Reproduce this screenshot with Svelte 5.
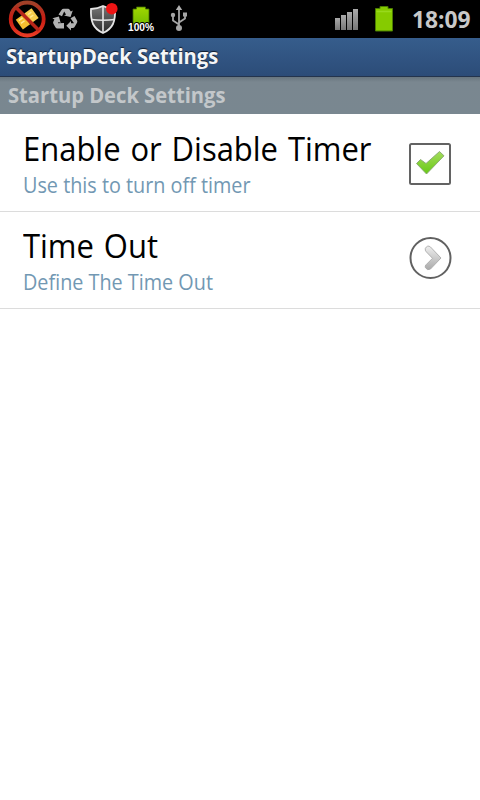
<script lang="ts">
	type Pref = { title: string; summary: string; kind: 'checkbox' | 'dialog' };

	const prefs: Pref[] = [
		{ title: 'Enable or Disable Timer', summary: 'Use this to turn off timer', kind: 'checkbox' },
		{ title: 'Time Out', summary: 'Define The Time Out', kind: 'dialog' }
	];

	let enabled = $state(true);
</script>

<div class="screen">
	<div class="status">
		<svg class="icons" width="200" height="38" viewBox="0 0 200 38">
			<defs>
				<linearGradient id="ban" x1="0" y1="0" x2="0" y2="1">
					<stop offset="0" stop-color="#a04028" />
					<stop offset="0.5" stop-color="#c91c12" />
					<stop offset="1" stop-color="#e83a24" />
				</linearGradient>
				<linearGradient id="shield" x1="0" y1="0" x2="0" y2="1">
					<stop offset="0" stop-color="#777" />
					<stop offset="1" stop-color="#292929" />
				</linearGradient>
				<linearGradient id="cell" x1="0" y1="0" x2="0" y2="1">
					<stop offset="0" stop-color="#a0d800" />
					<stop offset="1" stop-color="#71b900" />
				</linearGradient>
			</defs>

			<!-- blocked app -->
			<g transform="rotate(-36 27 19)">
				<rect x="17.500" y="13" width="9" height="12" fill="#f5bf30" />
				<rect x="28" y="13" width="9" height="12" fill="#f8cc4c" />
				<path d="M19.500 15.500h4.500M19.500 19h4.500M30.500 16h4M30.500 19.500h4" stroke="#ffe894" stroke-width="1.5" />
			</g>
			<circle cx="27.200" cy="19" r="16.500" fill="none" stroke="url(#ban)" stroke-width="3.800" />
			<path d="M16 7.500l23 23" stroke="#b9261a" stroke-width="3.600" />

			<!-- recycle -->
			<g fill="#b2b2b2">
				<path d="M58.500 14.500l3-4.600q.8-1.100 2.200-1.100h4.300q1.200 0 1.800 1.100l1 1.700 2-1.100-2.300 6.500-6.500-1.400 2-1.100-1.800-3-2.200 4.800z" />
				<path d="M70.500 18.200l4-2.200 2.500 4.400q.7 1.200 0 2.400l-2 3.500q-.7 1.700-2 1.700h-2v2.500l-4.700-4.800 4.700-4.800v2.400h3z" />
				<path d="M64 23v5.500h-6.500q-1.400 0-2.100-1.200l-2-3.600q-.6-1.200 0-2.300l1-1.900-2-1.200 6.500-1.700 1.800 6.400-2-1-.8 1.200z" />
			</g>

			<!-- shield -->
			<path d="M91 9q7-.4 12-3 5 2.600 12 3 .5 9-2 15-3 6-10 9-7-3-10-9-2.500-6-2-15z" fill="url(#shield)" stroke="#e4e4e4" stroke-width="1.800" />
			<path d="M103 7v25M91 19.500q12 1.500 24 0" fill="none" stroke="#e6e6e6" stroke-width="1.600" />
			<circle cx="111.800" cy="8.700" r="5.800" fill="#ee1414" />

			<!-- battery with level -->
			<path d="M136.500 7h9v2h3.500v18h-16V9h3.500z" fill="url(#cell)" stroke="#456f00" stroke-width="0.800" />
			<text x="128" y="31" class="level" textLength="26" lengthAdjust="spacingAndGlyphs">100%</text>

			<!-- usb -->
			<path d="M179 9v18M179 24.500l-6-4v-5M179 22.500l6-4v-4" fill="none" stroke="#a5a5a5" stroke-width="1.800" />
			<path d="M179 5l3.200 5h-6.400z" fill="#b0b0b0" />
			<circle cx="173" cy="15" r="2.200" fill="#a5a5a5" />
			<rect x="183" y="12.500" width="4" height="4" fill="#a5a5a5" />
			<circle cx="179" cy="28" r="3" fill="#a5a5a5" />
		</svg>

		<div class="right">
			<svg width="64" height="38" viewBox="332 0 64 38">
				<defs>
					<linearGradient id="bar" x1="0" y1="0" x2="0" y2="1">
						<stop offset="0" stop-color="#aaa" />
						<stop offset="1" stop-color="#777" />
					</linearGradient>
				</defs>
				<g fill="url(#bar)">
					<rect x="335" y="18" width="5" height="12" />
					<rect x="341" y="15" width="5" height="15" />
					<rect x="347" y="12" width="5" height="18" />
					<rect x="353" y="9" width="5" height="21" />
				</g>
				<path d="M380 6.500h8v2h4.500V31h-17V8.500h4.500z" fill="#86cb00" stroke="#4b7d00" />
				<path d="M376.500 11.500h15" stroke="#98d91c" stroke-width="1.500" />
			</svg>
			<span class="clock">18:09</span>
		</div>
	</div>

	<div class="titlebar"><span>StartupDeck Settings</span></div>
	<div class="category"><span>Startup Deck Settings</span></div>

	<div class="list">
		{#each prefs as pref}
			<div class="pref">
				<div class="labels">
					<div class="title"><span>{pref.title}</span></div>
					<div class="summary"><span>{pref.summary}</span></div>
				</div>
				{#if pref.kind === 'checkbox'}
					<button class="widget check" aria-label={pref.title} onclick={() => (enabled = !enabled)}>
						<svg width="44" height="44" viewBox="0 0 44 44">
							<defs>
								<linearGradient id="tick" x1="0" y1="0" x2="0" y2="1">
									<stop offset="0" stop-color="#a4dc5c" />
									<stop offset="1" stop-color="#68c916" />
								</linearGradient>
							</defs>
							<rect x="2" y="2" width="40" height="40" rx="1.500" fill="#fff" stroke="#636363" stroke-width="2" />
							{#if enabled}
								<path d="M8.500 21.500l4-4 5.500 4L31.500 9.500l4.500 4.300L18.500 32z" fill="url(#tick)" stroke="#86a670" stroke-width="0.900" stroke-linejoin="round" />
							{/if}
						</svg>
					</button>
				{:else}
					<button class="widget" aria-label={pref.title}>
						<svg width="44" height="44" viewBox="0 0 44 44">
							<defs>
								<linearGradient id="chev" x1="0" y1="0" x2="0" y2="1">
									<stop offset="0" stop-color="#eee" />
									<stop offset="1" stop-color="#aaa" />
								</linearGradient>
							</defs>
							<circle cx="22.500" cy="22" r="20" fill="#fff" stroke="#616161" stroke-width="2" />
							<path d="M17.300 12.500q2.200-4 5.200-1.500l10.500 11L22.500 33q-3 2-5.200-1.500-.6-1.500 1-3l6.200-6.200-6.200-6.500q-1.500-1.500-1-3.300z" fill="url(#chev)" stroke="#aaa" stroke-width="0.900" />
						</svg>
					</button>
				{/if}
			</div>
		{/each}
	</div>
</div>

<style>
	:global(body) { margin: 0; background: #fff; }

	.screen {
		width: 480px;
		height: 800px;
		overflow: hidden;
		background: #fff;
		font-family: "Open Sans", "Noto Sans", sans-serif;
	}

	span { display: inline-block; transform-origin: 0 50%; white-space: nowrap; }

	.status { display: flex; justify-content: space-between; height: 38px; background: #000; }
	.status svg { display: block; }
	.level { font: bold 10.5px "Liberation Sans", sans-serif; fill: #fff; stroke: #000; stroke-width: 2px; paint-order: stroke; }
	.right { display: flex; width: 148px; }
	.clock { margin-left: 16px; font-size: 23px; font-weight: 700; line-height: 39px; color: #c8c8c8; transform: scaleX(0.99); }

	.titlebar {
		box-sizing: border-box;
		height: 39px;
		padding-left: 6px;
		border-bottom: 1px solid #24344d;
		background: linear-gradient(#365d8c, #2c4c78);
		color: #f4f6f8;
		font-size: 21px;
		font-weight: 700;
		line-height: 37px;
		text-shadow: 0 -1px 1px #111b2b;
	}
	.titlebar span, .category span { transform: scaleX(0.96); }

	.category {
		height: 37px;
		padding-left: 8px;
		background: linear-gradient(#68757e, #7a8790 5px, #798790);
		color: #c3c7ca;
		font-size: 21px;
		font-weight: 700;
		line-height: 37px;
	}

	.pref {
		box-sizing: border-box;
		display: flex;
		justify-content: space-between;
		height: 97px;
		padding: 13px 28px 0 23px;
		border-bottom: 1px solid #dcdcdc;
	}
	.pref:first-child { height: 98px; padding-top: 14px; }

	.labels { width: 360px; }
	.title { height: 41px; font-size: 33px; line-height: 42px; color: #000; }
	.title span { transform: scaleX(0.938); word-spacing: 2px; }
	.summary { height: 30px; font-size: 22px; line-height: 30px; color: #7298b3; }
	.summary span { transform: scaleX(0.9); }

	.widget { width: 44px; height: 44px; margin: 11px 0 0; padding: 0; border: 0; background: none; }
	.widget svg { display: block; }
	.check { margin-top: 14px; }
</style>
